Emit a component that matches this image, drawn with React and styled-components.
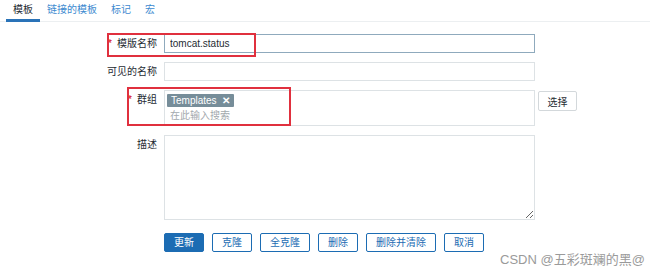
import styled, { createGlobalStyle } from "styled-components";

const GlobalStyle = createGlobalStyle`
  html, body {
    margin: 0;
    padding: 0;
    background: #ffffff;
  }
  body {
    font-family: "Liberation Sans", "Noto Sans CJK SC", sans-serif;
    font-size: 10px;
    color: #1f2c33;
  }
`;

const FONT = `"Liberation Sans", "Noto Sans CJK SC", sans-serif`;

const App = () => {
  return (
    <Page>
      <GlobalStyle />
      <TabBar>
        <Tab $active>模板</Tab>
        <Tab>链接的模板</Tab>
        <Tab>标记</Tab>
        <Tab>宏</Tab>
      </TabBar>

      <Form>
        <Label>
          <Required>*</Required>模版名称
        </Label>
        <Field>
          <TextInput $focused defaultValue="tomcat.status" />
        </Field>

        <Label>可见的名称</Label>
        <Field>
          <TextInput />
        </Field>

        <Label>
          <Required>*</Required>群组
        </Label>
        <Field>
          <MultiSelect>
            <Tag>
              Templates <TagClose>✕</TagClose>
            </Tag>
            <Placeholder>在此输入搜索</Placeholder>
          </MultiSelect>
          <SideButton>选择</SideButton>
        </Field>

        <Label>描述</Label>
        <Field>
          <TextArea />
        </Field>

        <span />
        <Actions>
          <Button $primary>更新</Button>
          <Button>克隆</Button>
          <Button>全克隆</Button>
          <Button>删除</Button>
          <Button>删除并清除</Button>
          <Button>取消</Button>
        </Actions>
      </Form>

      <Highlight style={{ left: 107, top: 33, width: 149, height: 24 }} />
      <Highlight style={{ left: 127, top: 87, width: 164, height: 39 }} />
      <Watermark>CSDN @五彩斑斓的黑@</Watermark>
    </Page>
  );
};

const Page = styled.div`
  position: relative;
  width: 650px;
  height: 271px;
  overflow: hidden;
  background: #ffffff;
`;

const TabBar = styled.nav`
  display: flex;
  height: 21px;
  padding-left: 6px;
  border-bottom: 1px solid #eceff1;
`;

const Tab = styled.div`
  padding: 3px 7px 0;
  line-height: 13px;
  font-size: 10px;
  color: ${(p) => (p.$active ? "#1f2c33" : "#3d8ad0")};
  border-bottom: 3px solid ${(p) => (p.$active ? "#2a73b8" : "transparent")};
  margin-bottom: -1px;
  box-sizing: border-box;
  height: 22px;
`;

const Form = styled.div`
  display: grid;
  grid-template-columns: 157px 1fr;
  column-gap: 7px;
  row-gap: 9px;
  margin-top: 12px;
`;

const Label = styled.label`
  text-align: right;
  font-size: 10px;
  line-height: 19px;
  color: #1f2c33;
  align-self: start;
`;

const Required = styled.span`
  color: #d40000;
  margin-right: 5px;
`;

const Field = styled.div`
  display: flex;
  align-items: flex-start;
  gap: 3px;
`;

const TextInput = styled.input`
  width: 371px;
  height: 19px;
  box-sizing: border-box;
  border: 1px solid ${(p) => (p.$focused ? "#8faabd" : "#dde2e5")};
  padding: 0 5px;
  font-family: ${FONT};
  font-size: 10px;
  color: #1f2c33;
  outline: none;
  background: #ffffff;
`;

const MultiSelect = styled.div`
  width: 371px;
  height: 36px;
  box-sizing: border-box;
  border: 1px solid #dde2e5;
  padding: 3px 2px 0;
  display: flex;
  flex-direction: column;
  align-items: flex-start;
`;

const Tag = styled.span`
  display: inline-flex;
  align-items: center;
  gap: 5px;
  height: 13px;
  padding: 0 4px;
  background: #768d99;
  color: #ffffff;
  font-size: 10px;
  line-height: 13px;
  border-radius: 1px;
`;

const TagClose = styled.span`
  font-size: 10px;
  font-weight: bold;
`;

const Placeholder = styled.span`
  margin-top: 3px;
  padding-left: 3px;
  color: #a3a9ad;
  font-size: 10px;
  line-height: 12px;
`;

const SideButton = styled.button`
  height: 20px;
  width: 39px;
  margin-top: 1px;
  border: 1px solid #d3d8db;
  background: #ffffff;
  color: #1f2c33;
  font-family: ${FONT};
  font-size: 10px;
  padding: 0;
  border-radius: 2px;
`;

const TextArea = styled.textarea`
  display: block;
  width: 371px;
  height: 85px;
  box-sizing: border-box;
  border: 1px solid #dde2e5;
  font-family: ${FONT};
  font-size: 10px;
  outline: none;
`;

const Actions = styled.div`
  display: flex;
  gap: 8px;
  margin-top: 4px;
`;

const Button = styled.button`
  height: 19px;
  padding: 0 9px;
  border: 1px solid #1c6cb3;
  border-radius: 2px;
  background: ${(p) => (p.$primary ? "#1c6cb3" : "#ffffff")};
  color: ${(p) => (p.$primary ? "#ffffff" : "#1c6cb3")};
  font-family: ${FONT};
  font-size: 10px;
  line-height: 17px;
`;

const Highlight = styled.div`
  position: absolute;
  border: 2px solid #e0303e;
  box-sizing: border-box;
  pointer-events: none;
`;

const Watermark = styled.div`
  position: absolute;
  left: 500px;
  top: 249px;
  font-family: ${FONT};
  font-size: 13px;
  color: #9a9a9a;
  white-space: nowrap;
`;

export default App;
